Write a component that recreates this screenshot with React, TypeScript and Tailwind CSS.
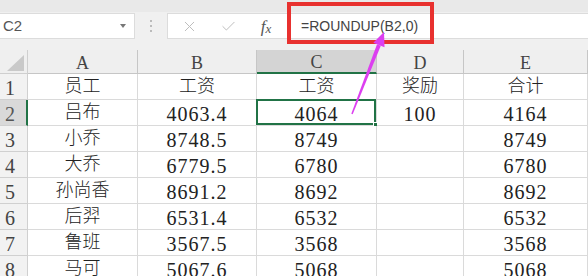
import React from 'react';
import { X, Check } from 'lucide-react';

const cols = ['A', 'B', 'C', 'D', 'E'];

const rows: string[][] = [
  ['员工', '工资', '工资', '奖励', '合计'],
  ['吕布', '4063.4', '4064', '100', '4164'],
  ['小乔', '8748.5', '8749', '', '8749'],
  ['大乔', '6779.5', '6780', '', '6780'],
  ['孙尚香', '8691.2', '8692', '', '8692'],
  ['后羿', '6531.4', '6532', '', '6532'],
  ['鲁班', '3567.5', '3568', '', '3568'],
  ['马可', '5067.6', '5068', '', '5068'],
];

const isCjk = (s: string) => /[\u4e00-\u9fff]/.test(s);

const Toolbar = () => (
  <div className="h-[50px] bg-[#f0f0f0] border-t-[12px] border-[#e9e9e9] flex items-start pt-px">
    <div className="w-[135px] h-[26px] bg-white border border-[#dcdcdc] border-l-0 flex items-center justify-between pl-[3px] pr-[8px]">
      <span className="text-[15px] text-[#555] font-['Liberation_Sans',sans-serif]">C2</span>
      <span className="w-0 h-0 border-l-[3px] border-r-[3px] border-t-[4px] border-l-transparent border-r-transparent border-t-[#777]" />
    </div>
    <div className="w-[32px] h-[26px] flex flex-col items-center justify-center gap-[3px]">
      <span className="w-[2px] h-[2px] bg-[#bbb]" />
      <span className="w-[2px] h-[2px] bg-[#bbb]" />
      <span className="w-[2px] h-[2px] bg-[#bbb]" />
    </div>
    <div className="flex-1 h-[26px] bg-white border border-[#dcdcdc] border-r-0 flex items-center">
      <div className="w-[40px] flex justify-center ml-[1px]">
        <X className="w-[17px] h-[17px] text-[#bdbdbd]" strokeWidth={1.4} />
      </div>
      <div className="w-[38px] flex justify-center">
        <Check className="w-[17px] h-[17px] text-[#bdbdbd]" strokeWidth={1.4} />
      </div>
      <div className="w-[38px] flex justify-center font-['Liberation_Serif',serif] italic text-[#555] text-[17px] leading-none">
        f<span className="text-[13px] mt-[4px]">x</span>
      </div>
      <span className="ml-[16px] text-[14px] text-[#444] font-['Liberation_Sans',sans-serif]">=ROUNDUP(B2,0)</span>
    </div>
  </div>
);

const Sheet = () => (
  <div className="grid grid-cols-[28px_110px_119px_120px_87px_1fr] grid-rows-[24px_repeat(8,26px)] font-['Liberation_Serif','Noto_Sans_CJK_SC',serif] text-[#222]">
    <div className="bg-[#efefef] border-r border-b border-[#cfcfcf] flex items-end justify-end pb-[2px] pr-[3px]">
      <svg width="17" height="16" viewBox="0 0 17 16">
        <polygon points="0,16 17,0 17,16" fill="#c9c9c9" />
      </svg>
    </div>
    {cols.map((c) => (
      <div
        key={c}
        className={
          c === 'C'
            ? 'bg-[#d4d4d4] border-r border-[#c6c6c6] border-b-2 border-b-[#217346] flex items-center justify-center pt-[3px] text-[18px] text-[#444]'
            : 'bg-[#efefef] border-r border-b border-[#c6c6c6] flex items-center justify-center pt-[3px] text-[18px] text-[#444]'
        }
      >
        {c}
      </div>
    ))}
    {rows.map((r, i) => (
      <React.Fragment key={i}>
        <div
          className={
            i === 1
              ? 'bg-[#d9d9d9] border-b border-[#d0d0d0] border-r-2 border-r-[#217346] flex items-center pl-[5px] pt-[2px] text-[20px] text-[#555]'
              : 'bg-[#f2f2f2] border-r border-b border-[#d0d0d0] flex items-center pl-[5px] pt-[2px] text-[20px] text-[#444]'
          }
        >
          {i + 1}
        </div>
        {r.map((v, j) => (
          <div
            key={j}
            className={
              isCjk(v)
                ? 'relative bg-white border-r border-b border-[#dadada] flex items-center justify-center text-[18px] font-light'
                : 'relative bg-white border-r border-b border-[#dadada] flex items-center justify-center pt-[3px] text-[20px] tracking-[1px]'
            }
          >
            {v}
            {i === 1 && j === 2 && (
              <>
                <div className="absolute -left-px -top-px w-[calc(100%+1px)] h-[calc(100%+1px)] border-2 border-[#217346]" />
                <div className="absolute -right-[3px] -bottom-[3px] w-[6px] h-[6px] bg-[#217346] border border-white" />
              </>
            )}
          </div>
        ))}
      </React.Fragment>
    ))}
  </div>
);

export default function App() {
  return (
    <div className="relative w-[588px] h-[276px] overflow-hidden bg-white">
      <Toolbar />
      <Sheet />
      {/* annotation: red box round the formula and the arrow */}
      <div className="absolute left-[287px] top-[2px] w-[147px] h-[42px] border-[4px] border-[#e8312f]" />
      <svg className="absolute left-0 top-0" width="588" height="276" viewBox="0 0 588 276">
        <polygon points="352.7,114.3 351.3,113.7 377,44.3 380.8,45.7" fill="#dc3ff0" />
        <polygon points="384,32 384.5,47.2 373.3,42.8" fill="#dc3ff0" />
      </svg>
    </div>
  );
}
